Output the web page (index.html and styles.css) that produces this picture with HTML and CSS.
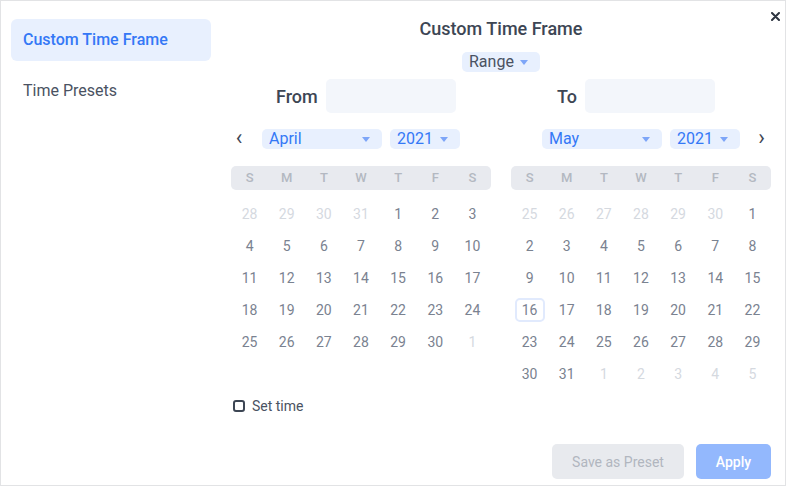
FILE: index.html
```html
<!DOCTYPE html>
<html>
<head>
  <meta charset="utf-8">
  <title>Custom Time Frame</title>
  <link rel="stylesheet" href="styles.css">
</head>

<body>
  <div class="dialog">
    <button class="close" aria-label="Close">
      <svg width="9" height="9" viewBox="0 0 9 9"><path d="M1 1L8 8M8 1L1 8" stroke="#2d3440" stroke-width="2" stroke-linecap="round"/></svg>
    </button>

    <nav class="sidebar">
      <a class="side-item active">Custom Time Frame</a>
      <a class="side-item">Time Presets</a>
    </nav>

    <main class="main">
      <h1 class="title">Custom Time Frame</h1>
      <div class="mode-row">
        <div class="dropdown mode">Range<span class="caret"></span></div>
      </div>

      <div class="cols">
        <div class="field">
          <label for="from">From</label>
          <input id="from" type="text">
        </div>
        <div class="field">
          <label for="to">To</label>
          <input id="to" type="text">
        </div>
      </div>

      <div class="cols">
        <div class="month-nav">
          <span class="arrow">‹</span>
          <div class="dropdown month">April<span class="caret"></span></div>
          <div class="dropdown year">2021<span class="caret"></span></div>
        </div>
        <div class="month-nav">
          <span class="arrow"></span>
          <div class="dropdown month">May<span class="caret"></span></div>
          <div class="dropdown year">2021<span class="caret"></span></div>
          <span class="arrow">›</span>
        </div>
      </div>

      <div class="cols">
        <div class="calendar" id="cal-april"></div>
        <div class="calendar" id="cal-may"></div>
      </div>

      <label class="set-time"><span class="check"></span>Set time</label>

      <div class="footer">
        <button class="btn secondary">Save as Preset</button>
        <button class="btn primary">Apply</button>
      </div>
    </main>
  </div>

  <script>
    const weekDays = ['S', 'M', 'T', 'W', 'T', 'F', 'S'];

    function buildCalendar(el, year, month, today) {
      const head = document.createElement('div');
      head.className = 'week-head';
      weekDays.forEach(function(d) {
        const s = document.createElement('span');
        s.textContent = d;
        head.appendChild(s);
      });
      el.appendChild(head);

      const grid = document.createElement('div');
      grid.className = 'days';
      const first = new Date(year, month, 1);
      const start = new Date(year, month, 1 - first.getDay());
      const last = new Date(year, month + 1, 0);
      const total = Math.ceil((first.getDay() + last.getDate()) / 7) * 7;

      for (let i = 0; i < total; i++) {
        const d = new Date(start.getFullYear(), start.getMonth(), start.getDate() + i);
        const cell = document.createElement('span');
        cell.className = 'day';
        if (d.getMonth() !== month) cell.classList.add('muted');
        if (d.getMonth() === month && d.getDate() === today) cell.classList.add('today');
        cell.textContent = d.getDate();
        grid.appendChild(cell);
      }
      el.appendChild(grid);
    }

    buildCalendar(document.querySelector('#cal-april'), 2021, 3, null);
    buildCalendar(document.querySelector('#cal-may'), 2021, 4, 16);
  </script>
</body>

</html>
```

FILE: styles.css
```css
html, body {
  margin: 0;
  padding: 0;
  background: #fff;
}

body {
  font-family: Roboto, 'Liberation Sans', sans-serif;
  color: #3d4654;
}

.dialog {
  position: relative;
  box-sizing: border-box;
  width: 786px;
  height: 486px;
  border: 1px solid #e2e3e5;
  display: flex;
}

.close {
  position: absolute;
  top: 9px;
  right: 4px;
  border: 0;
  background: none;
  padding: 0;
  width: 12px;
  height: 12px;
  display: flex;
  align-items: center;
  justify-content: center;
}

.sidebar {
  width: 200px;
  padding: 18px 10px;
  display: flex;
  flex-direction: column;
  gap: 9px;
}

.side-item {
  display: block;
  height: 42px;
  line-height: 42px;
  padding-left: 12px;
  border-radius: 6px;
  font-size: 16px;
  color: #4a5262;
}

.side-item.active {
  background: #e8f0fe;
  color: #3478f6;
  font-weight: 500;
}

.main {
  flex: 1;
  padding: 18px 14px 6px 10px;
  display: flex;
  flex-direction: column;
}

.title {
  margin: 0;
  font-size: 18px;
  line-height: 20px;
  font-weight: 500;
  text-align: center;
  color: #3d4654;
}

.mode-row {
  display: flex;
  justify-content: center;
  margin-top: 13px;
}

.dropdown {
  position: relative;
  box-sizing: border-box;
  height: 20px;
  line-height: 20px;
  background: #e8f0fe;
  border-radius: 5px;
  font-size: 16px;
  color: #3478f6;
  padding-left: 7px;
}

.caret {
  position: absolute;
  right: 12px;
  top: 8px;
  width: 0;
  height: 0;
  border-left: 4px solid transparent;
  border-right: 4px solid transparent;
  border-top: 5px solid #7ea6f8;
}

.dropdown.mode {
  width: 78px;
  color: #4a5262;
}

.dropdown.month {
  width: 120px;
}

.dropdown.year {
  width: 70px;
  margin-left: 8px;
}

.cols {
  display: flex;
  gap: 20px;
}

.cols > * {
  width: 260px;
  flex: none;
}

.field {
  margin-top: 7px;
  display: flex;
  align-items: center;
  gap: 8px;
  padding-left: 45px;
  box-sizing: border-box;
}

.field + .field {
  padding-left: 46px;
}

.field label {
  font-size: 18px;
  font-weight: 500;
  color: #3d4654;
}

.field input {
  width: 130px;
  height: 34px;
  box-sizing: border-box;
  border: 0;
  border-radius: 5px;
  background: #f3f6fb;
}

.month-nav {
  margin-top: 16px;
  display: flex;
  align-items: center;
}

.arrow {
  width: 31px;
  flex: none;
  text-align: center;
  font-size: 22px;
  line-height: 20px;
  color: #3d4654;
  margin-top: -3px;
}

.month-nav .arrow:first-child {
  width: 16px;
  padding-right: 15px;
}

.month-nav .arrow:last-child {
  padding-left: 12px;
  width: 19px;
}

.calendar {
  margin-top: 17px;
}

.week-head {
  display: grid;
  grid-template-columns: repeat(7, 1fr);
  height: 24px;
  line-height: 24px;
  background: #e8eaef;
  border-radius: 5px;
  font-size: 13px;
  font-weight: 500;
  color: #b3b8c1;
  text-align: center;
}

.days {
  margin-top: 8px;
  display: grid;
  grid-template-columns: repeat(7, 1fr);
  grid-auto-rows: 32px;
  font-size: 14px;
  color: #7a8290;
  text-align: center;
}

.day {
  display: flex;
  align-items: center;
  justify-content: center;
}

.day.muted {
  color: #d5d9df;
}

.day.today {
  justify-self: center;
  align-self: center;
  box-sizing: border-box;
  width: 30px;
  height: 24px;
  border: 2px solid #e1eafd;
  border-radius: 5px;
}

.set-time {
  margin-top: 8px;
  display: flex;
  align-items: center;
  gap: 7px;
  padding-left: 2px;
  font-size: 14px;
  color: #4a5262;
  height: 16px;
}

.check {
  width: 12px;
  height: 12px;
  box-sizing: border-box;
  border: 2px solid #3d4654;
  border-radius: 3px;
}

.footer {
  margin-top: auto;
  display: flex;
  justify-content: flex-end;
  gap: 12px;
}

.btn {
  height: 35px;
  border: 0;
  border-radius: 5px;
  font-family: inherit;
  font-size: 14px;
}

.btn.secondary {
  width: 132px;
  background: #e8eaee;
  color: #b1b6bf;
}

.btn.primary {
  width: 75px;
  background: #93b8fd;
  color: #fff;
  font-weight: 500;
}
```
